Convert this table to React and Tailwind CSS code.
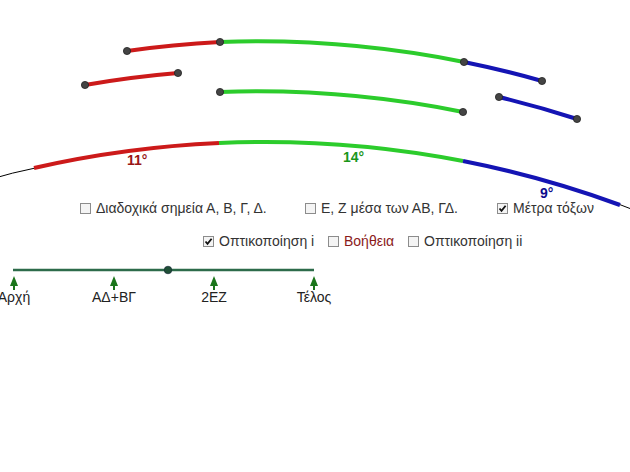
import React from 'react';

const R = 1039;

// coloured arcs of the construction: [x1, y1, x2, y2, colour]
const arcs = [
  [127, 51, 220, 42, '#cc1a1a'],
  [220, 42, 464, 62, '#2ccc2c'],
  [464, 62, 542, 81, '#1414b4'],
  [85, 85, 178, 73, '#cc1a1a'],
  [220, 92, 463, 112, '#2ccc2c'],
  [499, 97, 577, 119, '#1414b4'],
  [34, 168, 219, 143, '#cc1a1a'],
  [219, 143, 463, 161, '#2ccc2c'],
  [463, 161, 620, 205, '#1414b4'],
];

const points = [
  [127, 51], [220, 42], [464, 62], [542, 81],
  [85, 85], [178, 73], [220, 92], [463, 112],
  [499, 97], [577, 119],
];

const ticks = [
  { x: 14, label: 'Αρχή' },
  { x: 114, label: 'ΑΔ+ΒΓ' },
  { x: 214, label: '2ΕΖ' },
  { x: 314, label: 'Τέλος' },
];

const Box = ({ checked }) => (
  <span className="w-[11px] h-[11px] border border-[#8c8c8c] bg-[#f4f4f4] flex items-center justify-center shrink-0">
    {checked && (
      <svg width="9" height="9" viewBox="0 0 9 9">
        <path d="M1.5 4.5 L3.5 6.8 L7.6 1.8" fill="none" stroke="#111" strokeWidth="1.8" />
      </svg>
    )}
  </span>
);

const Check = ({ x, y, label, checked, red }) => (
  <label
    className={`absolute flex items-center gap-[5px] text-[14px] leading-none ${red ? 'text-[#8b1a1a]' : 'text-[#333333]'}`}
    style={{ left: x, top: y }}
  >
    <Box checked={checked} />
    <span>{label}</span>
  </label>
);

export default function App() {
  return (
    <div className="relative w-[630px] h-[472px] bg-white overflow-hidden" style={{ fontFamily: '"Liberation Sans", Arial, sans-serif' }}>
      <svg className="absolute inset-0" width="630" height="472">
        <circle cx="265" cy="1181" r={R} fill="none" stroke="#000" strokeWidth="1" />
        {arcs.map(([x1, y1, x2, y2, c], i) => (
          <path key={i} d={`M${x1} ${y1} A${R} ${R} 0 0 1 ${x2} ${y2}`} fill="none" stroke={c} strokeWidth="4" />
        ))}
        {points.map(([x, y], i) => (
          <circle key={i} cx={x} cy={y} r="3.6" fill="#444" stroke="#222" strokeWidth="0.8" />
        ))}
        <g fontWeight="bold" fontSize="14" fontFamily='"Liberation Sans", Arial, sans-serif'>
          <text x="127" y="165" fill="#991515">11°</text>
          <text x="343" y="162" fill="#1a961a">14°</text>
          <text x="540" y="198" fill="#0c0c8c">9°</text>
        </g>

        {/* slider */}
        <line x1="13" y1="270" x2="314" y2="270" stroke="#2d6b4a" strokeWidth="2.5" />
        <circle cx="168" cy="270" r="3.8" fill="#1f4f36" stroke="#123" strokeWidth="0.6" />
        {ticks.map(t => (
          <g key={t.x} fill="#1b761b">
            <polygon points={`${t.x - 4},286 ${t.x},276 ${t.x + 4},286`} />
            <rect x={t.x - 1} y="285" width="2" height="5" />
            <text x={t.x} y="302" textAnchor="middle" fontSize="14" fill="#222" fontFamily='"Liberation Sans", Arial, sans-serif'>{t.label}</text>
          </g>
        ))}
      </svg>

      <Check x={80} y={201} label="Διαδοχικά σημεία Α, Β, Γ, Δ." />
      <Check x={305} y={201} label="Ε, Ζ μέσα των ΑΒ, ΓΔ." />
      <Check x={497} y={201} label="Μέτρα τόξων" checked />
      <Check x={203} y={234} label="Οπτικοποίηση i" checked />
      <Check x={328} y={234} label="Βοήθεια" red />
      <Check x={408} y={234} label="Οπτικοποίηση ii" />
    </div>
  );
}
